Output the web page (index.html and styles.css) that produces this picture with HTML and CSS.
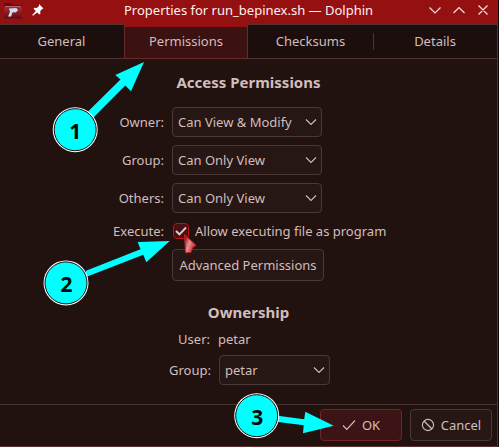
FILE: index.html
```html
<!DOCTYPE html>
<html lang="en">
<head>
<meta charset="utf-8">
<title>Properties for run_bepinex.sh — Dolphin</title>
<link rel="stylesheet" href="styles.css">
</head>
<body>
<div class="window">
  <header class="titlebar">
    <svg class="app-icon" width="18" height="16" viewBox="0 0 18 16">
      <defs><linearGradient id="folder" x2="0" y2="1"><stop stop-color="#a92932"/><stop offset="1" stop-color="#680f18"/></linearGradient></defs>
      <path d="M0 0h7l1 2h10v4H0z" fill="#630d12"/>
      <path d="M1 3h16v2H1z" fill="#b9656a"/>
      <path d="M0 4h18v11H0z" fill="url(#folder)"/>
      <path d="M5 5.500l7.500-.5 1.500 2.500-2.500 2-3-.2-1.400 4.200H4l2-4.500z" fill="#c7e1f5"/>
      <path d="M0 15h18" stroke="#5c0c12"/>
    </svg>
    <svg class="pin" width="12" height="12" viewBox="0 0 12 12"><path d="M7 0l4.500 4.500-1.300.5-2 2.200.2 2.600-1 .8-2.200-2.200L.9 11.800l-.7-.7L3.800 7 1.500 4.700l.9-.9 2.500.2L7 2z" fill="#fff"/></svg>
    <h1 class="title">Properties for run_bepinex.sh — Dolphin</h1>
    <svg class="controls" width="60" height="12" viewBox="0 0 60 12" fill="none" stroke="#f7dede" stroke-width="1.200"><path d="M.5 3.500l5.500 5.500 5.500-5.500M24.500 9L30 3.500 35.500 9M49.500 1.500l9 9m0-9l-9 9"/></svg>
  </header>
  <nav class="tabs">
    <div class="tab general">General</div>
    <div class="tab active">Permissions</div>
    <div class="tab checksums">Checksums</div>
    <div class="tab details">Details</div>
  </nav>
  <main class="content">
    <h2>Access Permissions</h2>
    <div class="form access">
      <label>Owner:</label>
      <div class="select">Can View &amp; Modify<svg width="12" height="8" viewBox="0 0 12 8"><path d="M1 1.500l5 5 5-5"/></svg></div>
      <label>Group:</label>
      <div class="select">Can Only View<svg width="12" height="8" viewBox="0 0 12 8"><path d="M1 1.500l5 5 5-5"/></svg></div>
      <label>Others:</label>
      <div class="select">Can Only View<svg width="12" height="8" viewBox="0 0 12 8"><path d="M1 1.500l5 5 5-5"/></svg></div>
    </div>
    <div class="form execute">
      <label>Execute:</label>
      <div class="check-row"><span class="checkbox"><svg width="14" height="14" viewBox="0 0 14 14"><path d="M2 7l3.500 3.300L12 3.500" fill="none" stroke="#e2cbcb" stroke-width="1.900"/></svg></span>Allow executing file as program</div>
    </div>
    <button class="button advanced">Advanced Permissions</button>
    <h2 class="ownership">Ownership</h2>
    <div class="form owner">
      <label>User:</label><span class="user">petar</span>
      <label>Group:</label>
      <div class="select">petar<svg width="12" height="8" viewBox="0 0 12 8"><path d="M1 1.500l5 5 5-5"/></svg></div>
    </div>
  </main>
  <footer class="footer">
    <button class="button ok"><svg width="14" height="12" viewBox="0 0 14 12"><path d="M1 6.500l3.800 4L13 1.500"/></svg>OK</button>
    <button class="button cancel"><svg width="14" height="14" viewBox="0 0 14 14"><circle cx="7" cy="7" r="5.600"/><path d="M3 3l8 8"/></svg>Cancel</button>
  </footer>
</div>
<svg class="annotations" width="499" height="447" viewBox="0 0 499 447">
  <defs><linearGradient id="cursor" x1="0" y1="0" x2="1" y2=".6"><stop offset=".15" stop-color="#a01820"/><stop offset=".5" stop-color="#e89090"/><stop offset="1" stop-color="#b52a2e"/></linearGradient></defs>
  <path d="M184.500 234.500l11.500 10.800-3.500 2.500-1.500 4.500-5.500.5z" fill="url(#cursor)" stroke="#c31d24"/>
  <g class="arrows">
    <path d="M88 111.500L120.500 79.500 115.300 75 144 62 131 91.300 125.300 85.500 93.500 117.500z"/>
    <path d="M86 270.800L140.500 249.300 137.700 242 169.700 241 146.300 262.300 143.300 254.800 86 277z"/>
    <path d="M276 415.500L304.200 419.200 305.300 411.700 333.700 425.700 303 433.300 303.700 425.300 276 421.800z"/>
  </g>
  <g class="markers">
    <circle class="ring" cx="75.200" cy="129.700" r="22.500"/><circle class="disc" cx="75.200" cy="129.700" r="21"/>
    <circle class="ring" cx="66" cy="282.900" r="22.500"/><circle class="disc" cx="66" cy="282.900" r="21"/>
    <circle class="ring" cx="256.700" cy="415.700" r="22.500"/><circle class="disc" cx="256.700" cy="415.700" r="21"/>
    <text x="75.300" y="139">1</text><text x="66.500" y="291.700">2</text><text x="257.300" y="424.700">3</text>
  </g>
</svg>
</body>
</html>
```
FILE: styles.css
```css
* { box-sizing: border-box; }
body {
  margin: 0;
  background: #0b0808;
  color: #d3bdbc;
  font: 13px/18px "Noto Sans", sans-serif;
  overflow: hidden;
}
.window {
  width: 498px;
  height: 447px;
  display: flex;
  flex-direction: column;
  background: #211210;
  border-right: 1px solid #4a3533;
  border-bottom: 1px solid #593331;
}
.titlebar {
  height: 24px;
  flex: none;
  display: flex;
  align-items: flex-start;
  background: #951011;
  color: #fff0f0;
}
.app-icon { margin: 3px 0 0 4px; }
.pin { margin: 4px 0 0 10px; }
.title {
  width: 250px;
  margin: 1px 0 0 80px;
  font-size: 13px;
  font-weight: 400;
  white-space: nowrap;
}
.controls { margin: 4px 0 0 55px; }
.tabs {
  display: flex;
  flex: none;
  height: 35px;
  background: #1c0e0d;
  border-top: 1px solid #513331;
  border-bottom: 1px solid #4f3532;
}
.tab { display: flex; align-items: center; justify-content: center; padding-bottom: 1px; }
.general { width: 124px; padding-right: 1px; }
.active {
  width: 124px;
  margin-top: -1px;
  margin-bottom: -1px;
  background: #3b1112;
  border: solid #652c2b;
  border-width: 0 1px 1px;
  border-top: 3px solid #951011;
  padding-bottom: 3px;
}
.checksums { width: 125px; }
.details { flex: 1; position: relative; }
.details::before {
  content: "";
  width: 1px;
  height: 17px;
  background: #4b3532;
  position: absolute;
  left: 0;
}
.content { flex: 1; padding-top: 13px; }
h2 {
  margin: 0;
  font-size: 15px;
  line-height: 20px;
  font-weight: 700;
  text-align: center;
}
.form { display: grid; align-items: center; column-gap: 8px; }
.form label { text-align: right; }
.access { grid-template-columns: 164px 150px; row-gap: 8px; margin-top: 15px; }
.select {
  display: flex;
  align-items: center;
  justify-content: space-between;
  height: 30px;
  padding: 0 4px 0 5px;
  border: 1px solid #4c3836;
  border-radius: 4px;
  background: #261614;
}
.select svg { fill: none; stroke: #d2bcba; stroke-width: 1.1; }
.execute { grid-template-columns: 164px 250px; margin-top: 9px; }
.check-row { display: flex; align-items: center; gap: 6px; padding-left: 1px; white-space: nowrap; }
.checkbox {
  display: flex;
  width: 16px;
  height: 16px;
  border: 1px solid #c20d12;
  border-radius: 4px;
  background: #461112;
}
.button {
  display: flex;
  align-items: center;
  justify-content: center;
  height: 32px;
  padding: 0;
  border: 1px solid #4c3836;
  border-radius: 4px;
  background: #261614;
  color: inherit;
  font: inherit;
}
.advanced { width: 152px; margin: 9px 0 0 172px; }
.ownership { margin-top: 21px; }
.owner { grid-template-columns: 211px 111px; row-gap: 7px; margin-top: 8px; }
.user { margin-left: -1px; }
.owner label:first-child { margin-right: 1px; }
.footer {
  display: flex;
  flex: none;
  justify-content: flex-end;
  gap: 8px;
  height: 42px;
  padding: 4px 5px 0 0;
  border-top: 1px solid #4b3532;
}
.footer .button { width: 82px; }
.footer svg { fill: none; stroke: #d3bdbc; stroke-width: 1.15; }
.footer .ok { gap: 6px; background: #3c1415; border-color: #712526; }
.footer .cancel { gap: 6px; }
.annotations { position: absolute; top: 0; left: 0; }
.arrows { fill: #00ffff; }
.ring { fill: #ffffff; }
.disc { fill: #00ffff; stroke: #101010; stroke-width: 1; }
.markers text { fill: #080808; font: 700 21px "Noto Sans", sans-serif; text-anchor: middle; }
```
